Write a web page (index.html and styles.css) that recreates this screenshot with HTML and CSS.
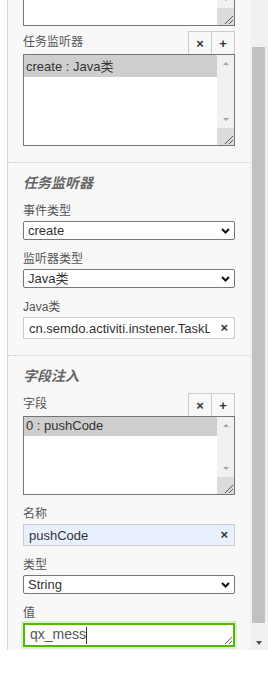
FILE: index.html
```html
<!DOCTYPE html>
<html>
<head>
<meta charset="utf-8" />
<title>任务属性</title>
<link rel="stylesheet" href="styles.css">
</head>
<body>
<div class="prop_panel">
    <div class="prop_body">
        <div class="prop_group group_scrolled">
            <div class="field field_area">
                <div class="box box_doc">
                    <textarea></textarea>
                    <div class="vbar">
                        <span class="up"></span>
                        <span class="down"></span>
                        <span class="grip"><svg width="17" height="17" viewBox="0 0 17 17"><path d="M16 8L8 16M16 12L12 16" stroke="#555" stroke-width="1" fill="none"/></svg></span>
                    </div>
                </div>
            </div>
            <div class="field">
                <div class="field_head">
                    <label>任务监听器</label>
                    <div class="btns"><button type="button">×</button><button type="button">+</button></div>
                </div>
                <div class="box box_tall">
                    <select multiple>
                        <option selected>create : Java类</option>
                    </select>
                    <div class="vbar">
                        <span class="up"></span>
                        <span class="down"></span>
                        <span class="grip"><svg width="17" height="17" viewBox="0 0 17 17"><path d="M16 8L8 16M16 12L12 16" stroke="#555" stroke-width="1" fill="none"/></svg></span>
                    </div>
                </div>
            </div>
        </div>
        <div class="prop_group">
            <h4>任务监听器</h4>
            <div class="field">
                <label>事件类型</label>
                <div class="sel_wrap">
                    <select class="sel">
                        <option selected>create</option>
                        <option>assignment</option>
                        <option>complete</option>
                        <option>delete</option>
                    </select>
                    <svg class="chevron" width="9" height="6" viewBox="0 0 9 6"><path d="M1 1L4.5 4.5L8 1" stroke="#111" stroke-width="2" fill="none"/></svg>
                </div>
            </div>
            <div class="field">
                <label>监听器类型</label>
                <div class="sel_wrap">
                    <select class="sel">
                        <option selected>Java类</option>
                        <option>表达式</option>
                        <option>代理表达式</option>
                    </select>
                    <svg class="chevron" width="9" height="6" viewBox="0 0 9 6"><path d="M1 1L4.5 4.5L8 1" stroke="#111" stroke-width="2" fill="none"/></svg>
                </div>
            </div>
            <div class="field">
                <label>Java类</label>
                <div class="input_wrap">
                    <input class="input" type="text" value="cn.semdo.activiti.instener.TaskListener" />
                    <span class="clear">×</span>
                </div>
            </div>
        </div>
        <div class="prop_group">
            <h4>字段注入</h4>
            <div class="field">
                <div class="field_head">
                    <label>字段</label>
                    <div class="btns"><button type="button">×</button><button type="button">+</button></div>
                </div>
                <div class="box box_short">
                    <select multiple>
                        <option selected>0 : pushCode</option>
                    </select>
                    <div class="vbar">
                        <span class="up"></span>
                        <span class="down"></span>
                        <span class="grip"><svg width="17" height="17" viewBox="0 0 17 17"><path d="M16 8L8 16M16 12L12 16" stroke="#555" stroke-width="1" fill="none"/></svg></span>
                    </div>
                </div>
            </div>
            <div class="field">
                <label>名称</label>
                <div class="input_wrap">
                    <input class="input input_fill" type="text" value="pushCode" />
                    <span class="clear">×</span>
                </div>
            </div>
            <div class="field">
                <label>类型</label>
                <div class="sel_wrap">
                    <select class="sel">
                        <option selected>String</option>
                        <option>表达式</option>
                    </select>
                    <svg class="chevron" width="9" height="6" viewBox="0 0 9 6"><path d="M1 1L4.5 4.5L8 1" stroke="#111" stroke-width="2" fill="none"/></svg>
                </div>
            </div>
            <div class="field">
                <label>值</label>
                <div class="val_wrap">
                    <textarea class="val_area">qx_mess</textarea><span class="caret"></span>
                </div>
            </div>
        </div>
    </div>
    <div class="prop_scroll">
        <div class="thumb"></div>
        <div class="arrow"><i></i></div>
    </div>
</div>
</body>
</html>
```
FILE: styles.css
```css
* {
    margin:0;
    padding:0;
    font-family:"Liberation Sans","Noto Sans CJK SC",sans-serif;
}
body,html {
    width:100%;
    background:#fff;
}
.prop_panel {
    margin-left:7px;
    height:650px;
    display:flex;
    border-left:1px solid #d6d6d6;
}
.prop_body {
    flex:1;
    overflow:hidden;
    background:#f8f8f8;
}
/* 面板已向下滚动 */
.group_scrolled {
    margin-top:-34px;
    padding-top:0 !important;
}
.prop_group {
    padding:10px 15px 16px 15px;
    border-bottom:1px dotted #c8c8c8;
}
.prop_group:last-child {
    border-bottom:none;
}
.prop_group h4 {
    font-size:14px;
    line-height:20px;
    font-style:italic;
    font-weight:bold;
    color:#666;
    margin-bottom:9px;
}
.field {
    margin-bottom:10px;
}
.field_area {
    margin-bottom:7px;
}
.prop_group .field:last-child {
    margin-bottom:0;
}
.field label {
    display:block;
    font-size:12px;
    line-height:19px;
    color:#555;
}
.field_head {
    display:flex;
    align-items:center;
    justify-content:space-between;
    margin-top:-2px;
}
.btns {
    display:flex;
}
    .btns button {
        width:24px;
        height:23px;
        border:1px solid #ccc;
        border-bottom:none;
        background:#f8f8f8;
        font-size:13px;
        font-weight:bold;
        color:#333;
    }
    .btns button + button {
        margin-left:-1px;
    }
.box {
    display:flex;
    box-sizing:border-box;
    border:1px solid #767676;
    background:#fff;
}
.box_doc {
    height:60px;
}
.box_tall {
    height:92px;
}
.box_short {
    height:79px;
}
    .box textarea {
        flex:1;
        min-width:0;
        border:none;
        outline:none;
        resize:none;
        background:#fff;
    }
    .box select {
        flex:1;
        min-width:0;
        border:none;
        outline:none;
        overflow:hidden;
        font-size:13px;
        color:#333;
        background:#fff;
    }
    .box option {
        padding:1px 2px 2px 2px;
    }
    .box option:checked {
        background:#cecece linear-gradient(0deg,#cecece 0%,#cecece 100%);
        color:#333;
    }
.vbar {
    width:17px;
    background:#f1f1f1;
    display:flex;
    flex-direction:column;
}
    .vbar .up,
    .vbar .down {
        height:17px;
        display:flex;
        align-items:center;
        justify-content:center;
    }
    .vbar .up {
        margin-bottom:auto;
    }
    .vbar .up::after {
        content:"";
        border-left:3px solid transparent;
        border-right:3px solid transparent;
        border-bottom:3px solid #a3a3a3;
    }
    .vbar .down::after {
        content:"";
        border-left:3px solid transparent;
        border-right:3px solid transparent;
        border-top:3px solid #a3a3a3;
    }
    .vbar .grip {
        height:17px;
        background:#dcdcdc;
    }
    .vbar .grip svg {
        display:block;
    }
.sel_wrap {
    position:relative;
}
.sel {
    display:block;
    width:100%;
    height:19px;
    box-sizing:border-box;
    -webkit-appearance:none;
    appearance:none;
    border:1px solid #767676;
    border-radius:2px;
    background:#fff;
    padding:0 20px 0 4px;
    font-size:13px;
    line-height:17px;
    font-weight:normal;
    color:#333;
    outline:none;
}
.chevron {
    position:absolute;
    right:5px;
    top:7px;
    pointer-events:none;
}
.input_wrap {
    position:relative;
}
.input {
    display:block;
    width:100%;
    height:22px;
    box-sizing:border-box;
    border:1px solid #ccc;
    background:#fff;
    padding:0 24px 0 5px;
    font-size:13px;
    color:#333;
    outline:none;
}
.input_fill {
    background:#e8f0fe;
}
.clear {
    position:absolute;
    right:7px;
    top:3px;
    font-size:13px;
    font-weight:bold;
    color:#333;
}
.val_wrap {
    position:relative;
}
.val_area {
    display:block;
    width:100%;
    height:24px;
    box-sizing:border-box;
    border:2px solid #52b800;
    box-shadow:0 0 0 2px #dcefd2;
    background:#fff;
    padding:1px 5px;
    font-size:14px;
    color:#555;
    outline:none;
    overflow:hidden;
    resize:vertical;
}
/* 输入光标 */
.caret {
    position:absolute;
    left:63px;
    top:4px;
    width:1px;
    height:17px;
    background:#333;
}
.prop_scroll {
    width:18px;
    background:#f1f1f1;
    display:flex;
    flex-direction:column;
}
    .prop_scroll .thumb {
        margin:47px 0 0 2px;
        width:13px;
        height:576px;
        background:#c1c1c1;
    }
    .prop_scroll .arrow {
        margin-top:auto;
        height:15px;
        display:flex;
        align-items:center;
        justify-content:center;
    }
        .prop_scroll .arrow i {
            border-left:3px solid transparent;
            border-right:3px solid transparent;
            border-top:4px solid #505050;
        }
```
